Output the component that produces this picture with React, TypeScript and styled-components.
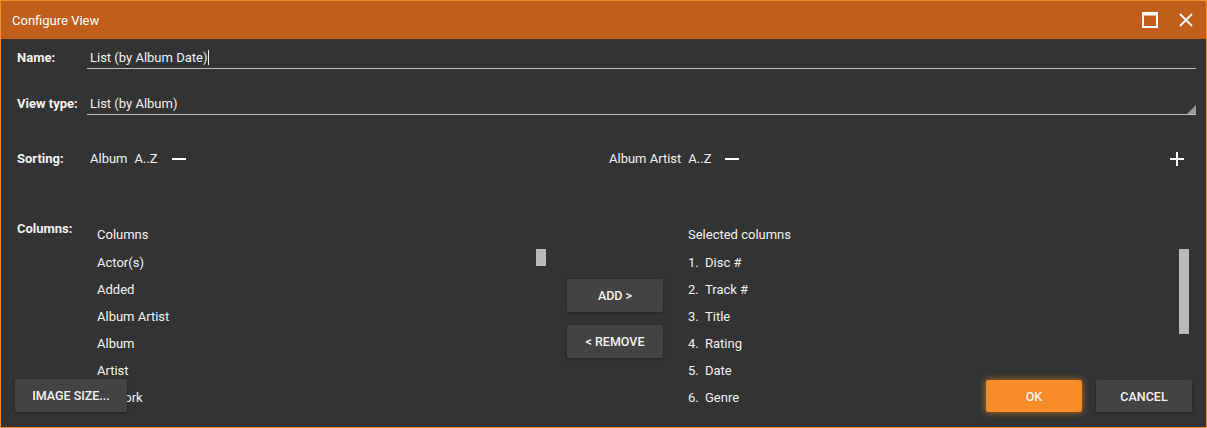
import React from 'react';
import styled, { createGlobalStyle } from 'styled-components';

const available = ['Actor(s)', 'Added', 'Album Artist', 'Album', 'Artist', 'Artwork'];
const selected = ['Disc #', 'Track #', 'Title', 'Rating', 'Date', 'Genre'];

const GlobalStyle = createGlobalStyle`
  html, body {
    margin: 0;
    padding: 0;
    background: #333333;
  }
  body {
    font-family: Roboto, "Liberation Sans", Arial, sans-serif;
    -webkit-font-smoothing: antialiased;
  }
`;

const Window = styled.div`
  position: relative;
  box-sizing: border-box;
  width: 1207px;
  height: 428px;
  border: 1px solid #f68b2a;
  background: #333333;
  color: #f2f2f2;
  overflow: hidden;
`;

const TitleBar = styled.div`
  display: flex;
  align-items: center;
  height: 38px;
  padding: 0 13px 0 11px;
  background: #c15e1b;
`;

const Title = styled.div`
  flex: 1;
  font-size: 13px;
  color: #ffffff;
`;

const WinButton = styled.button<{ $gap?: number }>`
  display: flex;
  align-items: center;
  justify-content: center;
  height: 20px;
  margin-left: ${p => p.$gap ?? 0}px;
  padding: 0;
  border: 0;
  background: transparent;
  cursor: pointer;
`;

const Body = styled.div`
  padding: 7px 10px 0 16px;
`;

const FieldRow = styled.div<{ $top: number }>`
  display: flex;
  align-items: center;
  margin-top: ${p => p.$top}px;
`;

const Label = styled.div<{ $width: number }>`
  width: ${p => p.$width}px;
  flex-shrink: 0;
  font-size: 13px;
  font-weight: 700;
  color: #f2f2f2;
`;

const Field = styled.div`
  position: relative;
  flex: 1;
  height: 22px;
  line-height: 23px;
  padding-left: 3px;
  border-bottom: 1px solid #bdbdbd;
  font-size: 13px;
`;

const Caret = styled.span`
  display: inline-block;
  width: 1px;
  height: 15px;
  margin-left: 1px;
  vertical-align: -3px;
  background: #f2f2f2;
`;

const DropCorner = styled.span`
  position: absolute;
  right: 0;
  bottom: 0;
  width: 9px;
  height: 9px;
  background: #9a9a9a;
  clip-path: polygon(100% 0, 100% 100%, 0 100%);
`;

const SortItem = styled.div`
  display: flex;
  align-items: center;
  width: 519px;
  font-size: 13px;
`;

const Gap = styled.span<{ $w: number }>`
  display: inline-block;
  width: ${p => p.$w}px;
`;

const IconButton = styled.button<{ $right?: number }>`
  display: flex;
  align-items: center;
  justify-content: center;
  width: 14px;
  height: 14px;
  margin-right: ${p => p.$right ?? 0}px;
  padding: 0;
  border: 0;
  background: transparent;
  cursor: pointer;
`;

const Spacer = styled.div`
  flex: 1;
`;

const ColumnsArea = styled.div`
  display: flex;
  margin-top: 55px;
`;

const ColumnsLabel = styled(Label)`
  padding-top: 1px;
  line-height: 14px;
`;

const ListPane = styled.div<{ $width: number }>`
  width: ${p => p.$width}px;
  flex-shrink: 0;
`;

const ListHeader = styled.div`
  height: 28px;
  padding-top: 4px;
  box-sizing: border-box;
  line-height: 20px;
  font-size: 13px;
`;

const ListBox = styled.div`
  position: relative;
  height: 200px;
`;

const ListItem = styled.div`
  height: 27px;
  line-height: 27px;
  font-size: 13px;
  white-space: nowrap;
`;

const Num = styled.span`
  display: inline-block;
  width: 17px;
`;

const Thumb = styled.div<{ $height: number }>`
  position: absolute;
  top: 0;
  right: 0;
  width: 10px;
  height: ${p => p.$height}px;
  background: #bababa;
`;

const Middle = styled.div`
  display: flex;
  flex-direction: column;
  gap: 13px;
  width: 96px;
  margin: 58px 25px 0 21px;
`;

const Button = styled.button<{ $primary?: boolean; $w?: number; $h?: number }>`
  width: ${p => p.$w ?? 96}px;
  height: ${p => p.$h ?? 33}px;
  padding: 0;
  border: 0;
  border-radius: 2px;
  background: ${p => (p.$primary ? '#f78b27' : '#434343')};
  box-shadow: ${p =>
    p.$primary ? '0 0 7px rgba(247, 139, 39, 0.75)' : '0 1px 3px rgba(0, 0, 0, 0.35)'};
  color: #f4f4f4;
  font-family: Roboto, "Liberation Sans", Arial, sans-serif;
  font-size: 12.5px;
  font-weight: 500;
  text-transform: uppercase;
  cursor: pointer;
`;

const Footer = styled.div`
  position: absolute;
  left: 14px;
  right: 14px;
  bottom: 15px;
  display: flex;
  align-items: flex-end;
  gap: 14px;
`;

const Dash = () => (
  <svg width="14" height="14" viewBox="0 0 14 14">
    <rect x="0" y="6" width="14" height="2" fill="#fff" />
  </svg>
);

const Plus = () => (
  <svg width="14" height="14" viewBox="0 0 14 14">
    <rect x="0" y="6" width="14" height="2" fill="#fff" />
    <rect x="6" y="0" width="2" height="14" fill="#fff" />
  </svg>
);

const App = () => (
  <>
    <GlobalStyle />
    <Window>
      <TitleBar>
        <Title>Configure View</Title>
        <WinButton aria-label="Maximize">
          <svg width="16" height="16" viewBox="0 0 16 16">
            <path d="M1 2.5h14M1 1.5v13.5h14V1.5" fill="none" stroke="#fff" strokeWidth="2" />
            <rect x="0" y="0" width="16" height="3" fill="#fff" />
          </svg>
        </WinButton>
        <WinButton aria-label="Close" $gap={21}>
          <svg width="14" height="14" viewBox="0 0 14 14">
            <path d="M1 1L13 13M13 1L1 13" stroke="#fff" strokeWidth="1.8" />
          </svg>
        </WinButton>
      </TitleBar>

      <Body>
        <FieldRow $top={0}>
          <Label $width={70}>Name:</Label>
          <Field>
            List (by Album Date)
            <Caret />
          </Field>
        </FieldRow>

        <FieldRow $top={23}>
          <Label $width={70}>View type:</Label>
          <Field>
            List (by Album)
            <DropCorner />
          </Field>
        </FieldRow>

        <FieldRow $top={36}>
          <Label $width={73}>Sorting:</Label>
          <SortItem>
            Album<Gap $w={7} />A..Z<Gap $w={14} />
            <IconButton aria-label="Remove sort">
              <Dash />
            </IconButton>
          </SortItem>
          <SortItem>
            Album Artist<Gap $w={7} />A..Z<Gap $w={14} />
            <IconButton aria-label="Remove sort">
              <Dash />
            </IconButton>
          </SortItem>
          <Spacer />
          <IconButton aria-label="Add sort" $right={12}>
            <Plus />
          </IconButton>
        </FieldRow>

        <ColumnsArea>
          <ColumnsLabel $width={80}>Columns:</ColumnsLabel>
          <ListPane $width={449}>
            <ListHeader>Columns</ListHeader>
            <ListBox>
              {available.map(name => (
                <ListItem key={name}>{name}</ListItem>
              ))}
              <Thumb $height={17} />
            </ListBox>
          </ListPane>
          <Middle>
            <Button>Add &gt;</Button>
            <Button>&lt; Remove</Button>
          </Middle>
          <ListPane $width={501}>
            <ListHeader>Selected columns</ListHeader>
            <ListBox>
              {selected.map((name, idx) => (
                <ListItem key={name}>
                  <Num>{idx + 1}.</Num>
                  {name}
                </ListItem>
              ))}
              <Thumb $height={85} />
            </ListBox>
          </ListPane>
        </ColumnsArea>
      </Body>

      <Footer>
        <Button $w={112}>Image size...</Button>
        <Spacer />
        <Button $primary $h={32}>OK</Button>
        <Button $h={32}>Cancel</Button>
      </Footer>
    </Window>
  </>
);

export default App;
